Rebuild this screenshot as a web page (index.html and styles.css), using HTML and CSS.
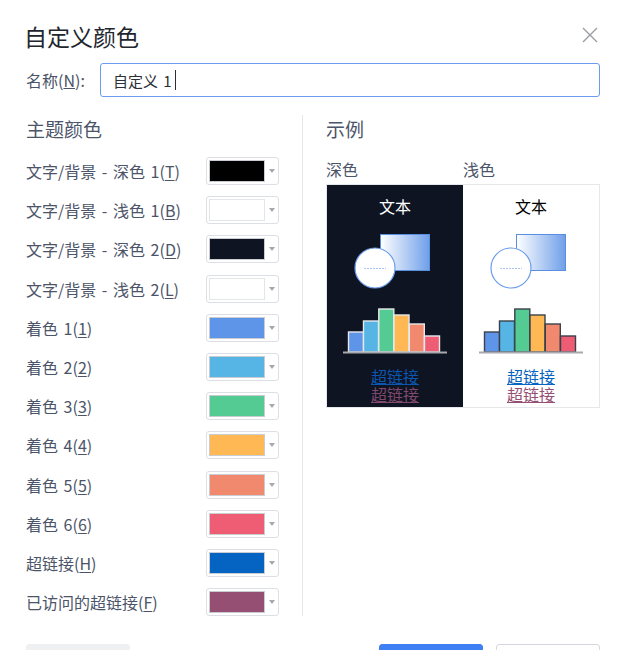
FILE: index.html
```html
<!DOCTYPE html>
<html lang="zh-CN">
<head>
<meta charset="utf-8">
<title>自定义颜色</title>
<link rel="stylesheet" href="styles.css">
</head>
<body>
<div class="dialog">
  <div class="header">
    <div class="title">自定义颜色</div>
    <svg class="close" width="16" height="16" viewBox="0 0 16 16"><path d="M1 1L15 15M15 1L1 15" stroke="#9a9da3" stroke-width="1.4" fill="none"/></svg>
  </div>
  <div class="name-row">
    <label class="name-label">名称(<u>N</u>):</label>
    <div class="name-input"><span>自定义 1</span><span class="caret"></span></div>
  </div>
  <div class="main">
    <div class="left">
      <div class="heading">主题颜色</div>
      <div class="rows">
        <div class="row"><span class="label">文字/背景 - 深色 1(<u>T</u>)</span><div class="picker"><span class="swatch" style="background:#000000"></span><span class="arrow"></span></div></div>
        <div class="row"><span class="label">文字/背景 - 浅色 1(<u>B</u>)</span><div class="picker"><span class="swatch light" style="background:#ffffff"></span><span class="arrow"></span></div></div>
        <div class="row"><span class="label">文字/背景 - 深色 2(<u>D</u>)</span><div class="picker"><span class="swatch" style="background:#0f1423"></span><span class="arrow"></span></div></div>
        <div class="row"><span class="label">文字/背景 - 浅色 2(<u>L</u>)</span><div class="picker"><span class="swatch light" style="background:#ffffff"></span><span class="arrow"></span></div></div>
        <div class="row"><span class="label">着色 1(<u>1</u>)</span><div class="picker"><span class="swatch" style="background:#5e95e8"></span><span class="arrow"></span></div></div>
        <div class="row"><span class="label">着色 2(<u>2</u>)</span><div class="picker"><span class="swatch" style="background:#56b5e4"></span><span class="arrow"></span></div></div>
        <div class="row"><span class="label">着色 3(<u>3</u>)</span><div class="picker"><span class="swatch" style="background:#53cb93"></span><span class="arrow"></span></div></div>
        <div class="row"><span class="label">着色 4(<u>4</u>)</span><div class="picker"><span class="swatch" style="background:#ffb853"></span><span class="arrow"></span></div></div>
        <div class="row"><span class="label">着色 5(<u>5</u>)</span><div class="picker"><span class="swatch" style="background:#f0896e"></span><span class="arrow"></span></div></div>
        <div class="row"><span class="label">着色 6(<u>6</u>)</span><div class="picker"><span class="swatch" style="background:#ee5d74"></span><span class="arrow"></span></div></div>
        <div class="row"><span class="label">超链接(<u>H</u>)</span><div class="picker"><span class="swatch" style="background:#0563c1"></span><span class="arrow"></span></div></div>
        <div class="row"><span class="label">已访问的超链接(<u>F</u>)</span><div class="picker"><span class="swatch" style="background:#954f72"></span><span class="arrow"></span></div></div>
      </div>
    </div>
    <div class="right">
      <div class="heading">示例</div>
      <div class="sub-labels"><span>深色</span><span>浅色</span></div>
      <div class="preview">
        <div class="panel dark">
          <div class="ptext">文本</div>
          <svg class="art" width="136" height="140" viewBox="0 0 136 140">
            <defs>
              <linearGradient id="gd" x1="0" x2="1" y1="0" y2="0"><stop offset="0" stop-color="#ffffff"/><stop offset="1" stop-color="#6f9fe9"/></linearGradient>
            </defs>
            <rect x="53.5" y="10.5" width="49" height="36" fill="url(#gd)" stroke="#5a8ee0" stroke-width="1"/>
            <circle cx="48" cy="44" r="20" fill="#ffffff" stroke="#6a9ce9" stroke-width="1.2"/>
            <path d="M37 44.5h22" stroke="#a9c4ef" stroke-width="1.2" stroke-dasharray="2 1"/>
            <g stroke="#e6e8ec" stroke-width="1.4">
              <rect x="21.5" y="108" width="15" height="20" fill="#5e95e8"/>
              <rect x="36.5" y="97" width="15" height="31" fill="#56b5e4"/>
              <rect x="51.8" y="85" width="15" height="43" fill="#53cb93"/>
              <rect x="67" y="91" width="15" height="37" fill="#ffb853"/>
              <rect x="82.3" y="100" width="15" height="28" fill="#f0896e"/>
              <rect x="97.5" y="112" width="15" height="16" fill="#ee5d74"/>
            </g>
            <path d="M16 128.5H120" stroke="#a7a9ae" stroke-width="2"/>
          </svg>
          <div class="link">超链接</div>
          <div class="link visited">超链接</div>
        </div>
        <div class="panel light">
          <div class="ptext">文本</div>
          <svg class="art" width="136" height="140" viewBox="0 0 136 140">
            <defs>
              <linearGradient id="gl" x1="0" x2="1" y1="0" y2="0"><stop offset="0" stop-color="#ffffff"/><stop offset="1" stop-color="#6f9fe9"/></linearGradient>
            </defs>
            <rect x="53.5" y="10.5" width="49" height="36" fill="url(#gl)" stroke="#5a8ee0" stroke-width="1"/>
            <circle cx="48" cy="44" r="20" fill="#ffffff" stroke="#6a9ce9" stroke-width="1.2"/>
            <path d="M37 44.5h22" stroke="#a9c4ef" stroke-width="1.2" stroke-dasharray="2 1"/>
            <g stroke="#3b404a" stroke-width="1.4">
              <rect x="21.5" y="108" width="15" height="20" fill="#5e95e8"/>
              <rect x="36.5" y="97" width="15" height="31" fill="#56b5e4"/>
              <rect x="51.8" y="85" width="15" height="43" fill="#53cb93"/>
              <rect x="67" y="91" width="15" height="37" fill="#ffb853"/>
              <rect x="82.3" y="100" width="15" height="28" fill="#f0896e"/>
              <rect x="97.5" y="112" width="15" height="16" fill="#ee5d74"/>
            </g>
            <path d="M16 128.5H120" stroke="#a7a9ae" stroke-width="2"/>
          </svg>
          <div class="link">超链接</div>
          <div class="link visited">超链接</div>
        </div>
      </div>
    </div>
  </div>
  <div class="footer">
    <button class="btn gray">恢复默认</button>
    <div class="footer-right">
      <button class="btn primary">确定</button>
      <button class="btn plain">取消</button>
    </div>
  </div>
</div>
</body>
</html>
```

FILE: styles.css
```css
* { box-sizing: border-box; }
html, body { margin: 0; padding: 0; background: #ffffff; }
body {
  font-family: "Noto Sans CJK SC", "Noto Sans", sans-serif;
  color: #4b5468;
  width: 627px;
  height: 650px;
  overflow: hidden;
}
.dialog { padding: 0 27px 0 26px; }
.header {
  display: flex;
  justify-content: space-between;
  align-items: center;
  padding-top: 22px;
  height: 50px;
  margin-left: -2px;
}
.title {
  font-size: 23px;
  line-height: 28px;
  color: #22262e;
}
.close { margin-right: 2px; margin-top: -2px; }
.name-row {
  display: flex;
  align-items: center;
  margin-top: 13px;
  height: 34px;
}
.name-label {
  width: 74px;
  font-size: 16px;
  color: #4b5468;
}
.name-input {
  flex: 1;
  height: 34px;
  border: 1px solid #6b9cf0;
  border-radius: 3px;
  padding-left: 12px;
  display: flex;
  align-items: center;
  font-size: 15px;
  color: #2b2f36;
  word-spacing: 2px;
}
.caret {
  display: inline-block;
  width: 1px;
  height: 20px;
  background: #2b2f36;
  margin-left: 3px;
}
.main {
  display: flex;
  margin-top: 18px;
}
.left {
  width: 277px;
  border-right: 1px solid #e6e7ea;
  padding-top: 3px;
}
.heading {
  font-size: 19px;
  line-height: 22px;
  color: #4b5468;
}
.rows {
  display: flex;
  flex-direction: column;
  gap: 11.2px;
  margin-top: 17px;
}
.row {
  display: flex;
  align-items: center;
  height: 28px;
}
.label {
  width: 180px;
  font-size: 16px;
  white-space: nowrap;
  word-spacing: 2px;
}
.label u { text-underline-offset: 2px; }
.picker {
  width: 73px;
  height: 28px;
  border: 1px solid #dcdfe5;
  border-radius: 3px;
  display: flex;
  align-items: center;
  padding-left: 2px;
}
.swatch {
  width: 56px;
  height: 22px;
  border: 1px solid #c9ccd2;
}
.swatch.light { border-color: #e3e5e9; }
.arrow {
  margin-left: 4px;
  width: 0;
  height: 0;
  border-left: 3.5px solid transparent;
  border-right: 3.5px solid transparent;
  border-top: 4px solid #a3a7ae;
}
.right {
  padding-left: 23px;
  padding-top: 3px;
  flex: 1;
}
.sub-labels {
  display: grid;
  grid-template-columns: 137px 136px;
  margin-top: 19px;
  font-size: 16px;
  line-height: 20px;
}
.preview {
  margin-top: 5px;
  display: flex;
  width: 274px;
  border: 1px solid #e6e7ea;
}
.panel {
  width: 136px;
  height: 222px;
  display: flex;
  flex-direction: column;
  align-items: center;
  padding-top: 11px;
}
.panel.dark { background: #0f1423; }
.panel.light { background: #ffffff; }
.ptext {
  font-size: 16px;
  line-height: 20px;
}
.dark .ptext { color: #ffffff; }
.light .ptext { color: #000000; }
.art { display: block; margin-top: 8px; }
.link {
  font-size: 16px;
  line-height: 18px;
  color: #0563c1;
  text-decoration: underline;
}
.art + .link { margin-top: 3px; }
.link.visited { color: #954f72; }
.dark .link { color: #0a56b0; }
.dark .link.visited { color: #80486a; }
.footer {
  display: flex;
  justify-content: space-between;
  margin-top: 28px;
}
.footer-right { display: flex; gap: 13px; }
.btn {
  width: 104px;
  height: 32px;
  border-radius: 3px;
  font-family: inherit;
  font-size: 14px;
  border: 1px solid transparent;
  padding: 0;
}
.btn.gray { background: #eff0f2; border-color: #eff0f2; color: #333; }
.btn.primary { background: #3f7ff4; border-color: #3f7ff4; color: #fff; }
.btn.plain { background: #fff; border-color: #d5d8de; color: #333; }
```
